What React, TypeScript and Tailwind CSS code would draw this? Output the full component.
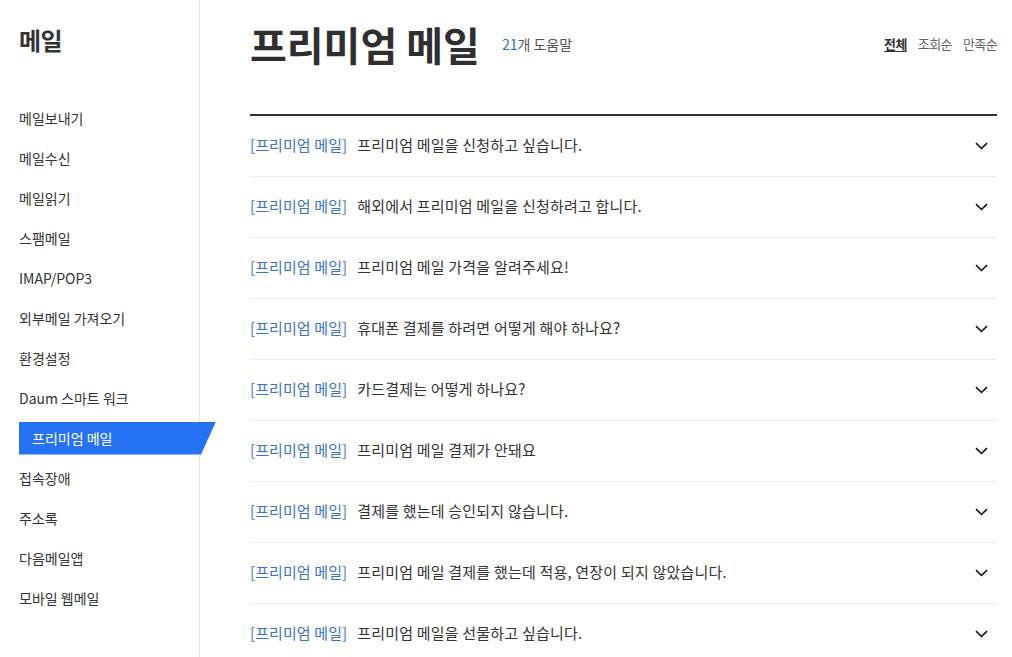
import React from "react";

const menu = [
  "메일보내기",
  "메일수신",
  "메일읽기",
  "스팸메일",
  "IMAP/POP3",
  "외부메일 가져오기",
  "환경설정",
  "Daum 스마트 워크",
  "프리미엄 메일",
  "접속장애",
  "주소록",
  "다음메일앱",
  "모바일 웹메일",
];

const rows = [
  "프리미엄 메일을 신청하고 싶습니다.",
  "해외에서 프리미엄 메일을 신청하려고 합니다.",
  "프리미엄 메일 가격을 알려주세요!",
  "휴대폰 결제를 하려면 어떻게 해야 하나요?",
  "카드결제는 어떻게 하나요?",
  "프리미엄 메일 결제가 안돼요",
  "결제를 했는데 승인되지 않습니다.",
  "프리미엄 메일 결제를 했는데 적용, 연장이 되지 않았습니다.",
  "프리미엄 메일을 선물하고 싶습니다.",
];

function Chevron() {
  return (
    <svg width="13" height="8" viewBox="0 0 13 8" fill="none">
      <path d="M1 1.2 L6.5 6.5 L12 1.2" stroke="#111" strokeWidth="1.6" />
    </svg>
  );
}

export default function App() {
  return (
    <div
      className="flex min-h-[657px] bg-white text-[#333]"
      style={{ fontFamily: "'Noto Sans CJK KR', 'Noto Sans', sans-serif" }}
    >
      <aside className="relative z-10 w-[200px] shrink-0 border-r border-[#e6e6e6] pl-[19px] pt-[25px]">
        <h1 className="text-[24px] font-bold leading-[30px] tracking-[-0.5px] text-[#333]">메일</h1>
        <ul className="mt-[43px]">
          {menu.map((m) => (
            <li key={m} className="flex h-[40px] items-center text-[14px] leading-[20px]">
              {m === "프리미엄 메일" ? (
                <div className="flex h-[33px] w-[197px] shrink-0 items-center bg-[#2672f5] pl-[13px] text-white [clip-path:polygon(0_0,100%_0,calc(100%-15px)_100%,0_100%)]">
                  {m}
                </div>
              ) : (
                <span>{m}</span>
              )}
            </li>
          ))}
        </ul>
      </aside>
      <main className="flex-1 pl-[50px] pr-[15px]">
        <header className="flex h-[114px] items-start pt-[20px]">
          <div className="flex h-[48px] flex-1 items-center">
            <h2 className="text-[40px] font-bold leading-[48px] text-[#2f2f2f]">프리미엄 메일</h2>
            <span className="ml-[22px] text-[14px] text-[#555]">
              <span className="text-[#2d6fd6]">21</span>개 도움말
            </span>
          </div>
          <div className="flex h-[48px] items-center gap-[11px] text-[13px] tracking-[-0.6px] text-[#666]">
            <span className="font-bold text-[#333] underline underline-offset-2">전체</span>
            <span>조회순</span>
            <span>만족순</span>
          </div>
        </header>
        <ul className="border-t-2 border-[#333]">
          {rows.map((r, i) => (
            <li key={i} className="flex h-[61px] items-center border-b border-[#ececec] pb-[2px] text-[15px] leading-[20px]">
              <span className="tracking-[0.1px] text-[#3a72d4]">[프리미엄 메일]</span>
              <span className="ml-[10px] flex-1 tracking-[0.2px] text-[#333]">{r}</span>
              <span className="mr-[9px] flex items-center pt-[1px]">
                <Chevron />
              </span>
            </li>
          ))}
        </ul>
      </main>
    </div>
  );
}
